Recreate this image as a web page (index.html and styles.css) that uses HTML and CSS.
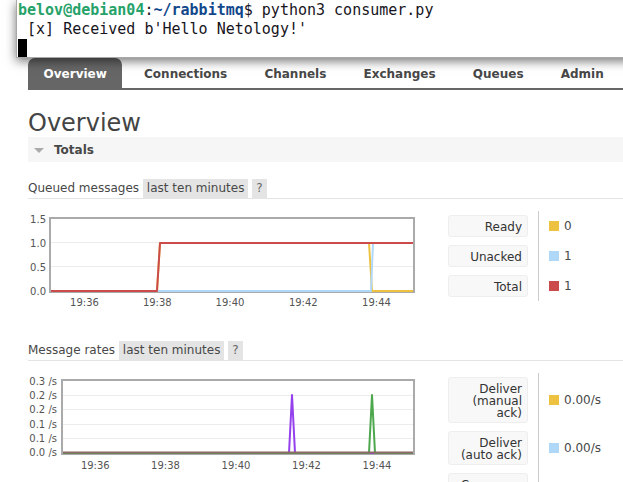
FILE: index.html
```html
<!DOCTYPE html>
<html>
<head>
<meta charset="utf-8">
<title>RabbitMQ Overview</title>
<link rel="stylesheet" href="styles.css">
</head>
<body>
<div class="page">
  <ul class="menu">
    <li class="tab active">Overview</li>
    <li class="tab">Connections</li>
    <li class="tab">Channels</li>
    <li class="tab">Exchanges</li>
    <li class="tab">Queues</li>
    <li class="tab">Admin</li>
  </ul>
  <h1 class="title">Overview</h1>
  <div class="section-bar"><span class="tri"></span>Totals</div>

  <div class="sect-title">Queued messages <span class="tag">last ten minutes</span> <span class="tag help">?</span></div>
  <div class="chart-row">
    <svg class="chart" width="392" height="100" viewBox="28 211 392 100">
      <line class="grid" x1="51" y1="242.5" x2="413" y2="242.5"/>
      <line class="grid" x1="51" y1="266.5" x2="413" y2="266.5"/>
      <rect x="50" y="218" width="364" height="74" class="frame"/>
      <polyline class="s s-yellow" points="51,291 157,291 160,243 369,243 372,291 413,291"/>
      <polyline class="s s-blue" points="51,291 371,291 373,243 413,243"/>
      <polyline class="s s-red" points="51,291 157,291 160,243 413,243"/>
      <g class="ax ax-y">
        <text x="46" y="223">1.5</text>
        <text x="46" y="246.6">1.0</text>
        <text x="46" y="270.6">0.5</text>
        <text x="46" y="294.6">0.0</text>
      </g>
      <g class="ax ax-x">
        <text x="84.5" y="305.5">19:36</text>
        <text x="157.3" y="305.5">19:38</text>
        <text x="230" y="305.5">19:40</text>
        <text x="303.3" y="305.5">19:42</text>
        <text x="376.5" y="305.5">19:44</text>
      </g>
    </svg>
    <div class="legend">
      <div class="lg-sep"></div>
      <div class="lg-label">Ready</div>
      <div class="lg-value"><i class="sw sw-yellow"></i>0</div>
      <div class="lg-label">Unacked</div>
      <div class="lg-value"><i class="sw sw-blue"></i>1</div>
      <div class="lg-label">Total</div>
      <div class="lg-value"><i class="sw sw-red"></i>1</div>
    </div>
  </div>

  <div class="sect-title second">Message rates <span class="tag">last ten minutes</span> <span class="tag help">?</span></div>
  <div class="chart-row">
    <svg class="chart" width="392" height="100" viewBox="28 373 392 100">
      <line class="grid" x1="63" y1="395.5" x2="413" y2="395.5"/>
      <line class="grid" x1="63" y1="409.5" x2="413" y2="409.5"/>
      <line class="grid" x1="63" y1="424.5" x2="413" y2="424.5"/>
      <line class="grid" x1="63" y1="438.5" x2="413" y2="438.5"/>
      <rect x="62" y="380" width="352" height="74" class="frame"/>
      <polyline class="s s-purple" points="63,453 289,453 292,395 295,453 413,453"/>
      <polyline class="s s-green" points="63,453 369,453 372,395 375,453 413,453"/>
      <polyline class="s s-brown" points="63,452.5 413,452.5"/>
      <g class="ax ax-y">
        <text x="57" y="385.3">0.3 /s</text>
        <text x="57" y="399.3">0.2 /s</text>
        <text x="57" y="413.4">0.2 /s</text>
        <text x="57" y="427.8">0.1 /s</text>
        <text x="57" y="442">0.1 /s</text>
        <text x="57" y="456.3">0.0 /s</text>
      </g>
      <g class="ax ax-x">
        <text x="95.3" y="468.5">19:36</text>
        <text x="165.5" y="468.5">19:38</text>
        <text x="236" y="468.5">19:40</text>
        <text x="306.5" y="468.5">19:42</text>
        <text x="377" y="468.5">19:44</text>
      </g>
    </svg>
    <div class="legend">
      <div class="lg-sep"></div>
      <div class="lg-label">Deliver (manual ack)</div>
      <div class="lg-value"><i class="sw sw-yellow"></i>0.00/s</div>
      <div class="lg-label">Deliver (auto ack)</div>
      <div class="lg-value"><i class="sw sw-blue"></i>0.00/s</div>
      <div class="lg-label">Consumer ack</div>
      <div class="lg-value"><i class="sw sw-red"></i>0.00/s</div>
    </div>
  </div>
</div>

<div class="terminal">
  <div class="term-line"><span class="t-user">belov@debian04</span>:<span class="t-path">~/rabbitmq</span>$ python3 consumer.py</div>
  <div class="term-line"> [x] Received b'Hello Netology!'</div>
  <div class="term-line"><span class="cursor"></span></div>
</div>
</body>
</html>
```
FILE: styles.css
```css
html, body {
  margin: 0;
  padding: 0;
  overflow: hidden;
  background: #fff;
}
body {
  font-family: "DejaVu Sans", Verdana, sans-serif;
  font-size: 12px;
  color: #484848;
  width: 623px;
  height: 482px;
  position: relative;
}
.page {
  padding: 58px 0 0 28px;
}
.menu {
  list-style: none;
  margin: 0;
  padding: 0;
  display: flex;
  height: 30px;
  border-bottom: 2px solid #666;
}
.tab {
  padding: 2px 15.6px 0;
  margin-right: 6px;
  line-height: 28px;
  font-weight: bold;
  color: #484848;
  white-space: nowrap;
}
.tab.active {
  background: #666;
  color: #fff;
  border-radius: 7px 7px 0 0;
}
.title {
  margin: 19px 0 0;
  font-size: 24px;
  line-height: 28px;
  font-weight: normal;
  color: #444;
}
.section-bar {
  box-sizing: border-box;
  height: 25px;
  padding: 2px 0 0 6px;
  line-height: 23px;
  background: #f6f6f6;
  font-weight: bold;
  color: #484848;
  display: flex;
  align-items: center;
}
.tri {
  width: 0;
  height: 0;
  border-left: 5px solid transparent;
  border-right: 5px solid transparent;
  border-top: 5px solid #aaa;
  margin-right: 10px;
}
.sect-title {
  margin-top: 17px;
  line-height: 19px;
  border-bottom: 1px solid #e4e4e4;
  color: #484848;
  white-space: nowrap;
}
.sect-title.second {
  margin-top: 30px;
}
.tag {
  display: inline-block;
  background: #e4e4e4;
  padding: 0 4px;
  line-height: 19px;
}
.tag.help {
  color: #666;
}
.chart-row {
  margin-top: 12px;
  display: flex;
  align-items: flex-start;
}
.chart {
  display: block;
  margin-right: 28px;
  flex: none;
}
.grid {
  stroke: #ececec;
  stroke-width: 1;
}
.frame {
  fill: none;
  stroke: #aaa;
  stroke-width: 2;
}
.s {
  fill: none;
  stroke-width: 2;
  stroke-linejoin: round;
}
.s-yellow { stroke: #edc240; }
.s-blue { stroke: #afd8f8; }
.s-red { stroke: #cb4b4b; }
.s-purple { stroke: #9440ed; }
.s-green { stroke: #4da74d; }
.s-brown { stroke: #8e6767; }
.ax text {
  font-family: "DejaVu Sans", Verdana, sans-serif;
  font-size: 10px;
  fill: #545454;
}
.ax-y text { text-anchor: end; }
.ax-x text { text-anchor: middle; }
.legend {
  display: grid;
  grid-template-columns: 80px 1px auto;
  column-gap: 10px;
  row-gap: 8px;
  padding: 4px 0;
}
.lg-sep {
  grid-column: 2;
  grid-row: 1 / span 3;
  background: #ccc;
  margin: -4px 0;
}
.lg-label {
  grid-column: 1;
  box-sizing: border-box;
  background: #f8f8f8;
  border: 1px solid #eee;
  border-radius: 3px;
  padding: 5px 5px 3px;
  line-height: 12px;
  text-align: right;
  color: #333;
}
.lg-value {
  grid-column: 3;
  display: flex;
  align-items: center;
  color: #484848;
  white-space: nowrap;
}
.sw {
  display: block;
  width: 10px;
  height: 10px;
  margin-right: 5px;
}
.sw-yellow { background: #edc240; }
.sw-blue { background: #afd8f8; }
.sw-red { background: #cb4b4b; }

.terminal {
  position: absolute;
  left: 16px;
  top: 0;
  right: -20px;
  height: 58px;
  box-sizing: border-box;
  background: #fff;
  border-left: 1px solid #a8a8a8;
  border-bottom: 1px solid #a8a8a8;
  box-shadow: 0 3px 10px rgba(0, 0, 0, 0.55);
  overflow: hidden;
  padding: 1px 0 0 1px;
  font-family: "DejaVu Sans Mono", monospace;
  font-size: 15px;
  color: #171421;
}
.term-line {
  height: 19px;
  line-height: 19px;
  white-space: pre;
}
.t-user {
  color: #26a269;
  font-weight: bold;
}
.t-path {
  color: #12488b;
  font-weight: bold;
}
.cursor {
  display: inline-block;
  width: 9px;
  height: 19px;
  background: #000;
  vertical-align: top;
}
```
